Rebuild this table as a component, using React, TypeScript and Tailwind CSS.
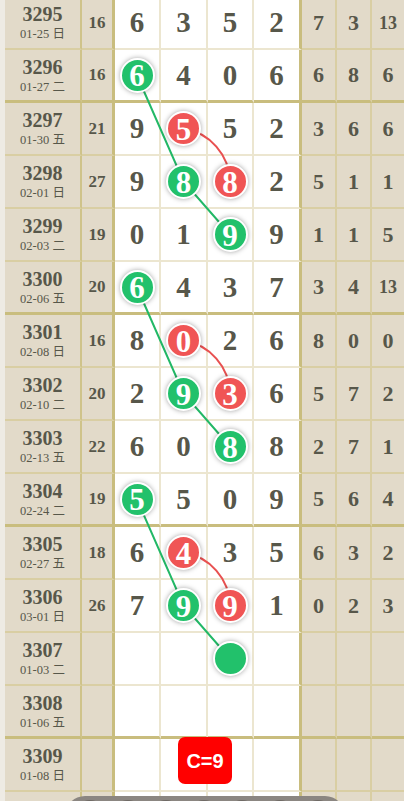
import React from "react";

type Mark = { c: number; color: "g" | "r" };
type Row = {
  p: string;
  d: string;
  s: string;
  n: string[];
  r: string[];
  marks?: Mark[];
  thick?: boolean;
  badge?: boolean;
  empty?: boolean;
};

const rows: Row[] = [
  { p: "3295", d: "01-25 日", s: "16", n: ["6", "3", "5", "2"], r: ["7", "3", "13"] },
  { p: "3296", d: "01-27 二", s: "16", n: ["6", "4", "0", "6"], r: ["6", "8", "6"], marks: [{ c: 0, color: "g" }], thick: true },
  { p: "3297", d: "01-30 五", s: "21", n: ["9", "5", "5", "2"], r: ["3", "6", "6"], marks: [{ c: 1, color: "r" }] },
  { p: "3298", d: "02-01 日", s: "27", n: ["9", "8", "8", "2"], r: ["5", "1", "1"], marks: [{ c: 1, color: "g" }, { c: 2, color: "r" }] },
  { p: "3299", d: "02-03 二", s: "19", n: ["0", "1", "9", "9"], r: ["1", "1", "5"], marks: [{ c: 2, color: "g" }] },
  { p: "3300", d: "02-06 五", s: "20", n: ["6", "4", "3", "7"], r: ["3", "4", "13"], marks: [{ c: 0, color: "g" }], thick: true },
  { p: "3301", d: "02-08 日", s: "16", n: ["8", "0", "2", "6"], r: ["8", "0", "0"], marks: [{ c: 1, color: "r" }] },
  { p: "3302", d: "02-10 二", s: "20", n: ["2", "9", "3", "6"], r: ["5", "7", "2"], marks: [{ c: 1, color: "g" }, { c: 2, color: "r" }] },
  { p: "3303", d: "02-13 五", s: "22", n: ["6", "0", "8", "8"], r: ["2", "7", "1"], marks: [{ c: 2, color: "g" }] },
  { p: "3304", d: "02-24 二", s: "19", n: ["5", "5", "0", "9"], r: ["5", "6", "4"], marks: [{ c: 0, color: "g" }], thick: true },
  { p: "3305", d: "02-27 五", s: "18", n: ["6", "4", "3", "5"], r: ["6", "3", "2"], marks: [{ c: 1, color: "r" }] },
  { p: "3306", d: "03-01 日", s: "26", n: ["7", "9", "9", "1"], r: ["0", "2", "3"], marks: [{ c: 1, color: "g" }, { c: 2, color: "r" }] },
  { p: "3307", d: "01-03 二", s: "", n: ["", "", "", ""], r: ["", "", ""], marks: [{ c: 2, color: "g" }] },
  { p: "3308", d: "01-06 五", s: "", n: ["", "", "", ""], r: ["", "", ""], thick: true },
  { p: "3309", d: "01-08 日", s: "", n: ["", "", "", ""], r: ["", "", ""], badge: true },
  { p: "", d: "", s: "", n: ["", "", "", ""], r: ["", "", ""], empty: true },
];

const serif = "'Liberation Serif','Noto Sans CJK SC',serif";

const numW = ["w-[46px]", "w-[47px]", "w-[46px]", "w-[48px]"];

function Ball({ v, color }: { v: string; color: "g" | "r" }) {
  return (
    <div
      className={
        "relative z-10 w-[35px] h-[35px] rounded-full border-2 border-white flex items-center justify-center text-white font-bold text-[31px] leading-none shadow-[0_0_5px_rgba(0,0,0,0.35)] " +
        (color === "g" ? "bg-[#22c16b]" : "bg-[#f05555]")
      }
    >
      <span className="pt-[1px]">{v}</span>
    </div>
  );
}

function TableRow({ row }: { row: Row }) {
  const beigeB = row.thick
    ? "border-b-[3px] border-b-[#c9bd7e]"
    : "border-b-2 border-b-[#d9cea3]";
  const whiteB = row.thick
    ? "border-b-[3px] border-b-[#c9bd7e]"
    : "border-b-2 border-b-[#ece6d0]";
  return (
    <div className="relative flex h-[53px]">
      <div className="w-[5px] shrink-0 bg-[#eeebe4]" />
      <div
        className={
          "w-[77px] shrink-0 bg-[#e2dac9] border-r-2 border-r-[#cfc38a] flex flex-col items-center justify-center text-[#57574a] " +
          beigeB
        }
      >
        {row.p && (
          <>
            <div className="text-[20px] leading-[20px] font-bold">{row.p}</div>
            <div className="text-[12.5px] leading-[14px] mt-[3px]">{row.d}</div>
          </>
        )}
      </div>
      <div
        className={
          "w-[33px] shrink-0 bg-[#e2dac9] border-r-[3px] border-r-[#c9bd7e] flex items-center justify-center text-[17px] font-bold text-[#57574a] " +
          beigeB
        }
      >
        {row.s}
      </div>
      {row.n.map((v, i) => {
        const mark = row.marks?.find((m) => m.c === i);
        return (
          <div
            key={i}
            className={
              numW[i] +
              " shrink-0 bg-white flex items-center justify-center text-[29px] leading-none font-bold text-[#57574a] " +
              (i === 3 ? "border-r-[3px] border-r-[#c9bd7e] " : "border-r-2 border-r-[#ece6d0] ") +
              whiteB
            }
          >
            {mark ? <Ball v={v} color={mark.color} /> : v}
          </div>
        );
      })}
      {row.r.map((v, i) => (
        <div
          key={"r" + i}
          className={
            (i === 2 ? "flex-1 " : "w-[35px] shrink-0 border-r-2 border-r-[#d9cea3] ") +
            "bg-[#e2dac9] flex items-center justify-center font-bold text-[#57574a] leading-none " +
            (v.length > 1 ? "text-[18px] " : "text-[22px] ") +
            beigeB
          }
        >
          {v}
        </div>
      ))}
      {row.badge && (
        <div
          className="absolute z-10 left-[178px] top-[-2px] w-[54px] h-[47px] rounded-[7px] bg-[#ff0000] flex items-center justify-center text-white font-bold text-[20px]"
          style={{ fontFamily: "'Liberation Sans',Arial,sans-serif" }}
        >
          C=9
        </div>
      )}
    </div>
  );
}

const cx = [137, 183.5, 230, 276.5];
const cy = (i: number) => 53 * i + 25.5;

export default function App() {
  return (
    <div
      className="relative w-[404px] h-[801px] overflow-hidden bg-white"
      style={{ fontFamily: serif }}
    >
      <div className="relative mt-[-3px]">
        {rows.map((r, i) => (
          <TableRow key={i} row={r} />
        ))}
        <svg
          className="absolute left-0 top-0 pointer-events-none"
          width={404}
          height={848}
          viewBox="0 0 404 848"
        >
          {[1, 5, 9].map((s) => (
            <polyline
              key={"g" + s}
              points={`${cx[0]},${cy(s)} ${cx[1]},${cy(s + 2)} ${cx[2]},${cy(s + 3)}`}
              fill="none"
              stroke="#22b866"
              strokeWidth={2}
            />
          ))}
          {[2, 6, 10].map((s) => (
            <path
              key={"r" + s}
              d={`M${cx[1]} ${cy(s)} A55 55 0 0 1 ${cx[2]} ${cy(s + 1)}`}
              fill="none"
              stroke="#e85050"
              strokeWidth={2}
            />
          ))}
        </svg>
      </div>
      <div className="absolute left-[65px] top-[796px] w-[280px] h-[40px] rounded-[20px] bg-[#8b8681] flex gap-[8px] px-[10px] pt-[4px]">
        {[0, 1, 2, 3, 4, 5, 6].map((i) => (
          <div key={i} className="w-[30px] h-[30px] rounded-full bg-[#6e6964]" />
        ))}
      </div>
    </div>
  );
}
